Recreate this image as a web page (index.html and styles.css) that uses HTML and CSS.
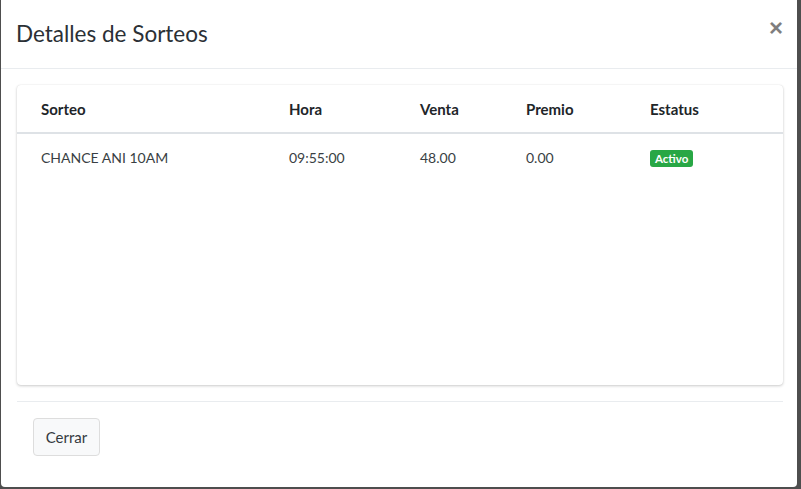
FILE: index.html
```html
<!DOCTYPE html>
<html lang="es">
<head>
<meta charset="utf-8">
<title>Detalles de Sorteos</title>
<link rel="stylesheet" href="styles.css">
</head>
<body>
<div class="modal">
  <div class="modal-header">
    <h4 class="modal-title">Detalles de Sorteos</h4>
    <button class="close" type="button">×</button>
  </div>
  <div class="modal-body">
    <div class="card">
      <table class="table">
        <colgroup>
          <col class="c1"><col class="c2"><col class="c3"><col class="c4"><col class="c5">
        </colgroup>
        <thead>
          <tr><th>Sorteo</th><th>Hora</th><th>Venta</th><th>Premio</th><th>Estatus</th></tr>
        </thead>
        <tbody>
          <tr><td>CHANCE ANI 10AM</td><td>09:55:00</td><td>48.00</td><td>0.00</td><td><span class="badge">Activo</span></td></tr>
        </tbody>
      </table>
    </div>
    <div class="modal-footer">
      <button class="btn" type="button">Cerrar</button>
    </div>
  </div>
</div>
</body>
</html>
```
FILE: styles.css
```css
html, body {
  margin: 0;
  padding: 0;
  height: 100%;
}
body {
  background: #4e4e4e;
  font-family: Lato, "Liberation Sans", sans-serif;
  color: #212529;
  overflow: hidden;
}
.modal {
  margin-left: 1px;
  width: 796px;
  height: 487px;
  background: #fff;
  border-radius: 0 0 4px 4px;
  box-sizing: border-box;
  display: flex;
  flex-direction: column;
}
.modal-header {
  display: flex;
  align-items: flex-start;
  padding: 16px 16px 16px 16px;
  border-bottom: 1px solid #e9ecef;
}
.modal-title {
  margin: 0 0 0 -1px;
  font-size: 22.5px;
  font-weight: 400;
  line-height: 36px;
  color: #2b3035;
}
.close {
  margin: -16px -18px -16px auto;
  padding: 16px 16px;
  background: transparent;
  border: 0;
  font-family: "Liberation Sans", sans-serif;
  font-size: 24px;
  font-weight: 700;
  line-height: 1;
  color: #000;
  opacity: .5;
  cursor: pointer;
  position: relative;
  top: 0;
}
.modal-body {
  padding: 16px 14px 0 16px;
  flex: 1;
  display: flex;
  flex-direction: column;
}
.card {
  height: 300px;
  background: #fff;
  border-radius: 4px;
  box-shadow: 0 0 1px rgba(0,0,0,.125), 0 1px 3px rgba(0,0,0,.2);
}
.table {
  width: 100%;
  border-collapse: collapse;
  table-layout: fixed;
  font-size: 15px;
}
.c1 { width: 248px; }
.c2 { width: 131px; }
.c3 { width: 106px; }
.c4 { width: 124px; }
.c5 { width: auto; }
.table th, .table td {
  text-align: left;
  padding: 12px 0 12px 24px;
  line-height: 24px;
  white-space: nowrap;
}
.table th {
  font-weight: 700;
  border-bottom: 2px solid #dee2e6;
  padding-bottom: 11px;
  color: #212529;
}
.table td {
  color: #3a3f44;
  font-size: 14px;
}
.badge {
  display: inline-block;
  background: #28a745;
  color: #fff;
  font-size: 11.5px;
  font-weight: 700;
  line-height: 13px;
  padding: 2px 5px 2px;
  border-radius: 3px;
  vertical-align: 0;
}
.modal-footer {
  margin-top: 16px;
  border-top: 1px solid #e9ecef;
  padding: 16px 16px;
}
.btn {
  width: 67px;
  height: 38px;
  background: #f8f9fa;
  border: 1px solid #dddddd;
  border-radius: 4px;
  font-family: Lato, "Liberation Sans", sans-serif;
  font-size: 15px;
  color: #343a40;
  padding: 0;
}
```
